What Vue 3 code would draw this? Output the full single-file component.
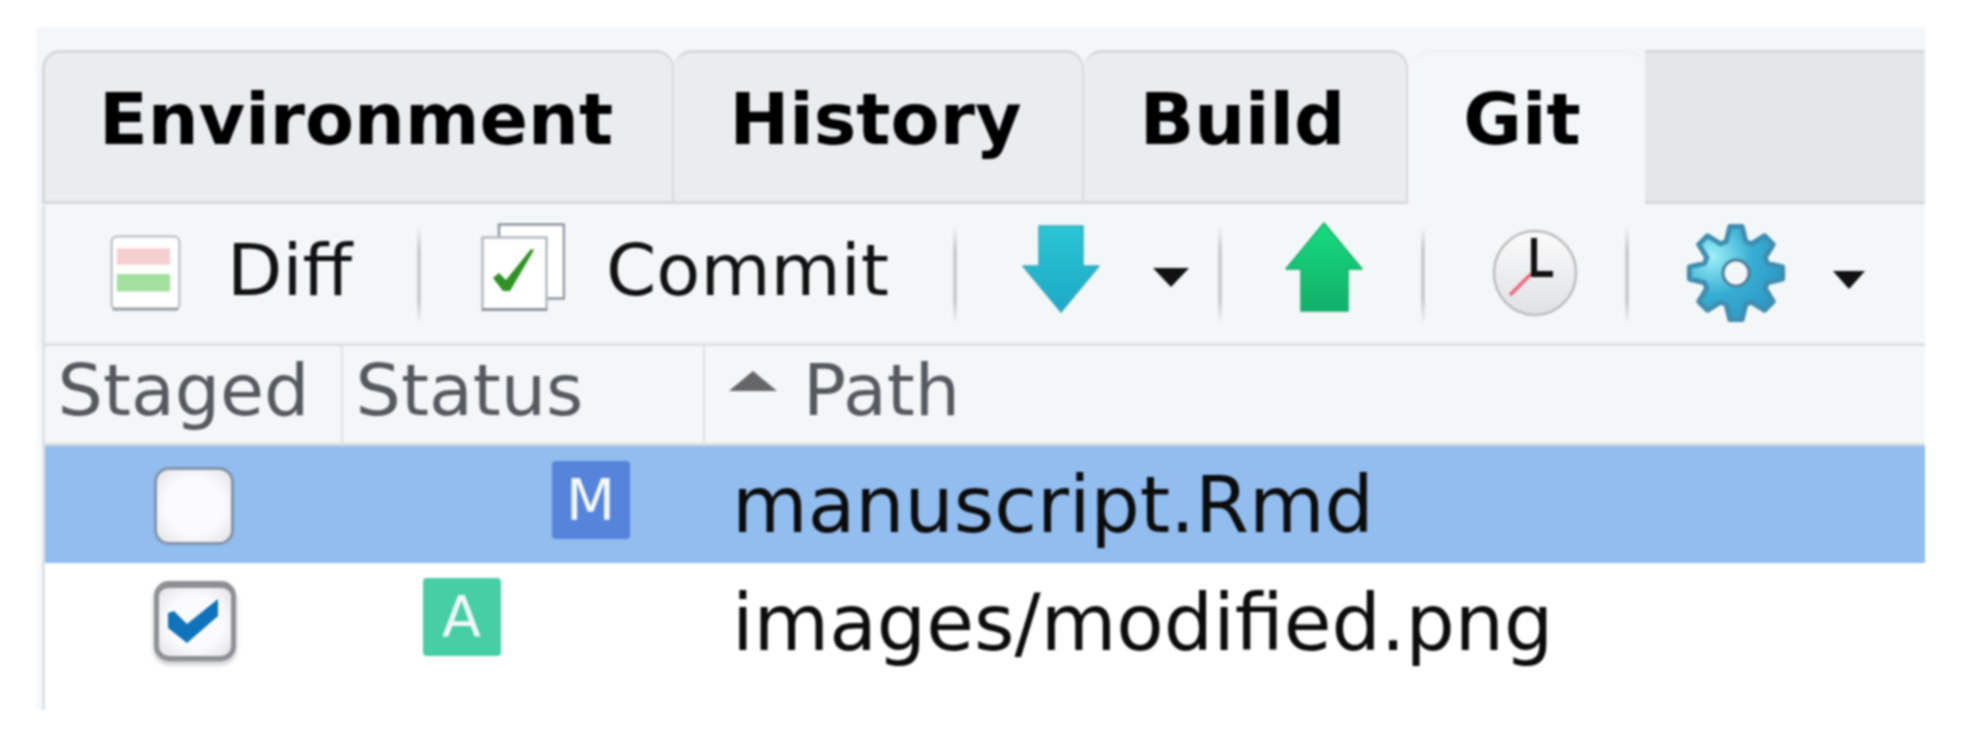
<template>
  <div class="page">
    <div class="panel">
      <div class="tabs">
        <div v-for="tab in tabs" :key="tab" class="tab" :class="[tab.toLowerCase(), { active: tab === 'Git' }]">{{ tab }}</div>
        <div class="tab-fill"></div>
      </div>

      <div class="pane">
        <div class="toolbar">
          <svg class="icon diff-icon" width="73" height="77" viewBox="0 0 70 75">
            <rect x="2" y="1.5" width="66" height="71" rx="5" fill="#fff" stroke="#c3c8cd" stroke-width="2.5" />
            <path d="M3 72h64" stroke="#9ba1a8" stroke-width="3" />
            <rect x="7" y="13" width="52" height="16" rx="1" fill="#f5cfd0" />
            <rect x="7" y="38" width="52" height="17" rx="1" fill="#a3e09f" />
          </svg>
          <span class="label diff-label">Diff</span>
          <i class="sep first"></i>

          <svg class="icon commit-icon" width="84" height="88" viewBox="0 0 84 88">
            <rect x="18" y="1.5" width="65" height="74" fill="#fff" stroke="#8f96a0" stroke-width="2.5" />
            <rect x="1.5" y="14.5" width="64" height="72" fill="#fff" stroke="#b4bac1" stroke-width="2.5" />
            <path d="M1 86.5h65" stroke="#8f96a0" stroke-width="3" />
            <path d="M12 55l6-5 7 7 25-31 3 1-24 41h-7z" fill="#2f9225" />
          </svg>
          <span class="label commit-label">Commit</span>
          <i class="sep commit-sep"></i>

          <svg class="icon pull-icon" width="78" height="88" viewBox="0 0 78 88">
            <defs>
              <linearGradient id="pullFill" x1="0" y1="0" x2="0" y2="1">
                <stop offset="0" stop-color="#2ac6d4" />
                <stop offset="1" stop-color="#1ca9c6" />
              </linearGradient>
            </defs>
            <path d="M17 1h44v40h16L39 87 1 41h16z" fill="url(#pullFill)" stroke="#3ba9bd" stroke-width="1.5" stroke-linejoin="round" />
          </svg>
          <span class="caret pull-caret"></span>
          <i class="sep pull-sep"></i>

          <svg class="icon push-icon" width="78" height="90" viewBox="0 0 78 90">
            <defs>
              <linearGradient id="pushFill" x1="0" y1="0" x2="0" y2="1">
                <stop offset="0" stop-color="#17dc80" />
                <stop offset="1" stop-color="#12b06b" />
              </linearGradient>
            </defs>
            <path d="M39 1l38 46H63v42H16V47H1z" fill="url(#pushFill)" stroke="#14ad64" stroke-width="1.5" stroke-linejoin="round" />
          </svg>
          <i class="sep push-sep"></i>

          <svg class="icon clock-icon" width="86" height="88" viewBox="0 0 86 88">
            <defs>
              <linearGradient id="clockFill" x1="0" y1="0" x2="0" y2="1">
                <stop offset="0" stop-color="#fbfbfb" />
                <stop offset="1" stop-color="#dfe1e3" />
              </linearGradient>
            </defs>
            <ellipse cx="43" cy="44" rx="41" ry="42" fill="url(#clockFill)" stroke="#bcbcbc" stroke-width="2.5" />
            <path d="M39 45L18 66" stroke="#f0667c" stroke-width="3.5" />
            <path d="M42 9v36h19" fill="none" stroke="#111" stroke-width="6" />
          </svg>
          <i class="sep clock-sep"></i>

          <svg class="icon gear-icon" width="100" height="104" viewBox="-50 -52 100 104">
            <defs>
              <radialGradient id="gearFill" cx="0.25" cy="0.32" r="0.75">
                <stop offset="0" stop-color="#9df1f8" />
                <stop offset="0.55" stop-color="#38aed3" />
                <stop offset="1" stop-color="#2d9ac7" />
              </radialGradient>
            </defs>
            <path :d="gearPath" fill="url(#gearFill)" stroke="#3f8eb0" stroke-width="5" stroke-linejoin="round" />
            <circle r="13" fill="#f3f7f8" stroke="#4c7f96" stroke-width="3" />
          </svg>
          <span class="caret gear-caret"></span>
        </div>

        <div class="grid head">
          <div class="col staged-col">Staged</div>
          <div class="col status-col">Status</div>
          <div class="col path-col"><span class="sort"></span>Path</div>
        </div>

        <div v-for="file in files" :key="file.path" class="grid row" :class="{ selected: file.selected }">
          <div class="check-cell">
            <span class="check" :class="{ on: file.staged }">
              <svg v-if="file.staged" width="82" height="80" viewBox="0 0 82 80">
                <path d="M14 32l6-2 13 13 31-25v17L33 62 14 47z" fill="#0f73bb" />
              </svg>
            </span>
          </div>
          <div class="status-cell">
            <span class="slot"><b v-if="file.staged" class="badge added">A</b></span>
            <span class="slot"><b v-if="!file.staged" class="badge modified">M</b></span>
          </div>
          <div class="path-cell">{{ file.path }}</div>
        </div>
      </div>
    </div>
  </div>
</template>

<script setup>
const tabs = ['Environment', 'History', 'Build', 'Git'];

const files = [
  { path: 'manuscript.Rmd', staged: false, selected: true },
  { path: 'images/modified.png', staged: true, selected: false },
];

// eight rounded teeth, first one pointing up
const gearPath = (() => {
  const pts = [];
  for (let i = 0; i < 8; i++) {
    const a = (i * Math.PI) / 4 - Math.PI / 2;
    for (const [r, d] of [[33, -0.3], [47, -0.13], [47, 0.13], [33, 0.3]]) {
      pts.push(`${(r * Math.cos(a + d)).toFixed(1)} ${(r * Math.sin(a + d)).toFixed(1)}`);
    }
  }
  return `M${pts.join('L')}Z`;
})();
</script>

<style>
html,
body {
  margin: 0;
  background: #fff;
}
</style>

<style scoped>
.page {
  height: 741px;
  padding: 27px 0 0 36px;
  box-sizing: border-box;
  overflow: hidden;
  font-family: "DejaVu Sans", sans-serif;
  filter: blur(0.9px);
}

.panel {
  width: 1889px;
  height: 683px;
  box-sizing: border-box;
  padding: 23px 0 0 6px;
  background: linear-gradient(#f4f6f8 320px, #f8f9fa 320px);
  overflow: hidden;
}

/* tabs */
.tabs {
  display: flex;
  height: 156px;
}

.tab {
  flex: none;
  height: 154px;
  box-sizing: border-box;
  padding: 27px 5px 0 0;
  text-align: center;
  font-size: 71.5px;
  line-height: 80px;
  font-weight: 700;
  color: #000;
  background: #ebecee;
  border: solid #d6d9dc;
  border-width: 3px 2px 3px 0;
  border-radius: 18px 18px 0 0;
}

.environment {
  width: 632px;
  border-left-width: 3px;
}
.history {
  width: 410px;
}
.build {
  width: 324px;
}
.git {
  width: 233px;
  height: 156px;
  margin-left: 4px;
  padding-right: 13px;
  background: #f3f7f8;
  border-width: 3px 0 0;
  border-color: #eef0f2;
}

.tab-fill {
  flex: 1;
  height: 154px;
  box-sizing: border-box;
  background: #e5e6e8;
  border: solid #d6d9dc;
  border-width: 3px 0;
}

/* everything under the tabs */
.pane {
  height: 504px;
  background: #fff;
  border-left: 3px solid #dde1e5;
}

.toolbar {
  display: flex;
  align-items: center;
  height: 140px;
  box-sizing: border-box;
  background: #f3f7f8;
  border-bottom: 3px solid #dcdfe2;
  font-size: 72px;
  color: #111;
}

.icon {
  flex: none;
  filter: blur(0.7px);
}
.label {
  flex: none;
  margin-top: -9px;
  line-height: 80px;
}

.sep {
  flex: none;
  width: 4px;
  height: 98px;
  background: linear-gradient(transparent, #c9ccd0 25%, #c9ccd0 75%, transparent);
}

.diff-icon {
  margin: -3px 0 0 64px;
}
.diff-label {
  margin-left: 45px;
}
.first {
  margin-left: 65px;
}
.commit-icon {
  margin: -15px 0 0 60px;
}
.commit-label {
  margin-left: 41px;
}
.commit-sep {
  margin-left: 64.5px;
}
.pull-icon {
  margin: -12px 0 0 65px;
}
.pull-sep {
  margin-left: 28.5px;
}
.push-icon {
  margin: -15px 0 0 63px;
}
.push-sep {
  margin-left: 58px;
}
.clock-icon {
  margin: -4px 0 0 67px;
}
.clock-sep {
  margin-left: 47px;
}
.gear-icon {
  margin: -3px 0 0 57.5px;
}

.caret {
  flex: none;
  width: 0;
  height: 0;
  border-style: solid;
  border-color: #111 transparent transparent;
}
.pull-caret {
  margin: 5.5px 0 0 52.7px;
  border-width: 19px 18px 0;
}
.gear-caret {
  margin: 10px 0 0 47px;
  border-width: 18px 16px 0;
}

/* file table */
.grid {
  display: grid;
  grid-template-columns: 297.5px 362px 1fr;
}

.head {
  height: 100px;
  background: #f3f7f8;
  border-bottom: 3px solid #d9dcdf;
  box-sizing: border-box;
  font-size: 71.5px;
  line-height: 80px;
  color: #555a5f;
}

.col {
  padding: 5px 0 0 14px;
  border-right: 2px solid #dfe2e5;
  white-space: nowrap;
}
.staged-col {
  padding-left: 12.5px;
}
.status-col {
  padding-left: 13px;
}
.path-col {
  padding-left: 24.5px;
  border-right: none;
}

.sort {
  display: inline-block;
  width: 0;
  height: 0;
  margin-right: 26px;
  vertical-align: 24px;
  border-style: solid;
  border-width: 0 24px 20px;
  border-color: transparent transparent #666;
}

.row {
  height: 117px;
  font-size: 77.7px;
  line-height: 88px;
  color: #0c0c0c;
}
.selected {
  background: #91bdef;
}

.check-cell {
  padding: 20.6px 0 0 108.5px;
}
.row:not(.selected) .check-cell {
  padding-top: 18px;
}

.check {
  display: block;
  width: 80px;
  height: 78px;
  box-sizing: border-box;
  border: 3px solid #8293a9;
  border-radius: 15px;
  background: radial-gradient(#fbfbfd 55%, #e2e2e6);
}
.check.on {
  position: relative;
  width: 82px;
  height: 80px;
  border: 5px solid #8e9094;
  border-top-width: 7px;
  box-shadow: 0 3px 5px rgba(0, 0, 0, 0.25);
}
.check.on svg {
  position: absolute;
  left: -5px;
  top: -7px;
}

.status-cell {
  display: flex;
  padding: 15px 0 0 80px;
}
.slot {
  flex: none;
  width: 129px;
}

.badge {
  display: block;
  width: 78px;
  height: 78px;
  border-radius: 4px;
  text-align: center;
  font-size: 57px;
  font-weight: 400;
  line-height: 78px;
  color: #f4f8fb;
}
.added {
  background: #46cea5;
}
.modified {
  background: #5584da;
}

.path-cell {
  padding: 14.5px 0 0 27.5px;
}
.row:not(.selected) .path-cell {
  padding-top: 16px;
}
</style>
